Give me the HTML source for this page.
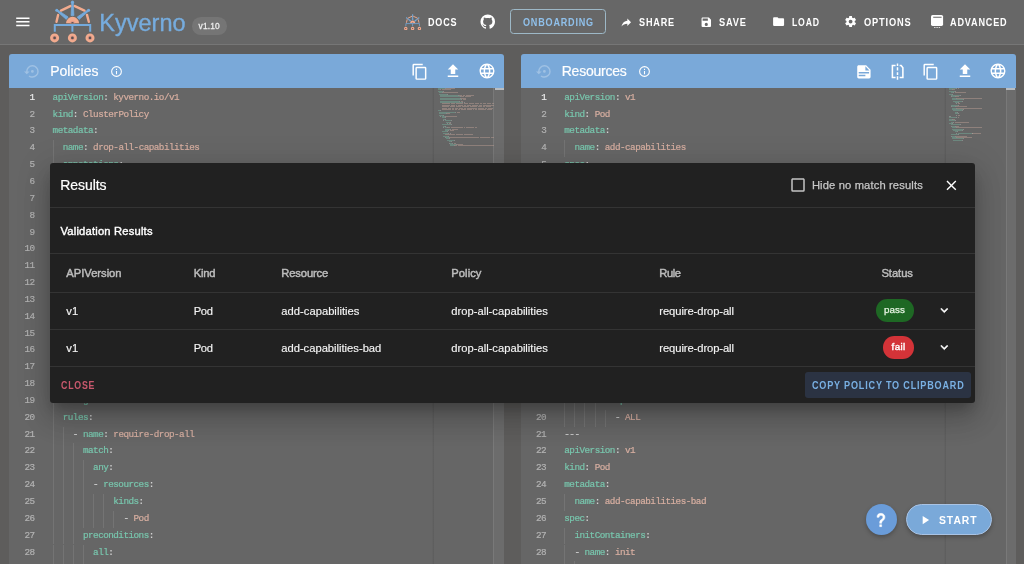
<!DOCTYPE html><html><head><meta charset="utf-8"><title>Kyverno Playground</title><style>
*{box-sizing:border-box;margin:0;padding:0}
html,body{will-change:transform;width:1024px;height:564px;overflow:hidden;background:#5e5d5c;font-family:"Liberation Sans",sans-serif;}
.abs{position:absolute}
.mm i{position:absolute;height:1.1px;opacity:.34}
#appbar{position:absolute;left:0;top:0;width:1024px;height:44.5px;background:#676767;border-bottom:1px solid #767676}
.nav{position:absolute;top:0;height:44px;line-height:44px;color:#fff;font-weight:bold;font-size:9.6px;letter-spacing:1.05px;white-space:nowrap}
.panel{position:absolute;top:54.2px;height:520px;background:#666666;border-radius:3px 3px 0 0;overflow:hidden}
.phead{position:absolute;left:0;top:0;right:0;height:33.8px;background:#7aa9d9}
.ptitle{position:absolute;top:0;height:33.8px;line-height:33.8px;color:#fff;font-size:14px;white-space:nowrap}
.ln{position:absolute;height:16.842px;line-height:16.842px;text-align:right;color:#b2b2b2;font-family:"Liberation Mono",monospace;font-size:9.300px;letter-spacing:-0.520px;white-space:pre}
.ln.act{color:#ececec}
.cl{position:absolute;height:16.842px;line-height:16.842px;font-family:"Liberation Mono",monospace;font-size:9.300px;letter-spacing:-0.520px;white-space:pre;color:#d2d2d2}
.k{color:#78c6ad} .v{color:#d8afa1} .p{color:#d2d2d2}
.cl,.ln{-webkit-text-stroke:0.2px}
.ig{position:absolute;width:1px;height:16.842px;background:#747474}
#dlg{position:absolute;left:50px;top:162.6px;width:924.9px;height:240.2px;background:#212121;border-radius:3px;box-shadow:0 8px 11px -4px rgba(0,0,0,.2),0 17px 27px 2px rgba(0,0,0,.14),0 6px 32px 5px rgba(0,0,0,.12)}
.hr{position:absolute;left:0;right:0;height:1px;background:#373737}
.th{position:absolute;top:90.3px;height:39.2px;line-height:39.2px;color:#bcbcbc;font-size:11.2px;white-space:nowrap;-webkit-text-stroke:0.3px #bcbcbc}
.td{position:absolute;height:37px;line-height:37px;color:#f2f2f2;font-size:11.2px;white-space:nowrap}
.chip{position:absolute;height:22.2px;line-height:22.2px;border-radius:11.1px;color:#fff;font-size:9.8px;text-align:center}
</style></head><body>
<div id="appbar"></div>
<svg class="abs" style="left:13.70px;top:12.90px;opacity:1" width="17.7" height="17.7" viewBox="0 0 24 24"><path fill="#fff" d="M3,6H21V8H3V6M3,11H21V13H3V11M3,16H21V18H3V16Z"/></svg>
<svg class="abs" style="left:49.8px;top:0px" width="45.00" height="43.00" viewBox="0 0 45 43"><g fill="none"><path d="M4.8 31.8V24.9H40.2V31.8M22.4 24.9V31.8" stroke="#74aadc" stroke-width="2" stroke-linecap="butt" stroke-linejoin="miter"/><circle cx="4.6" cy="37.9" r="4.5" fill="#f2ab8e"/><circle cx="4.6" cy="37.9" r="2.3" fill="#e59a88"/><circle cx="4.6" cy="37.9" r="1.35" fill="#5a5050"/><circle cx="22.4" cy="37.9" r="4.5" fill="#f2ab8e"/><circle cx="22.4" cy="37.9" r="2.3" fill="#e59a88"/><circle cx="22.4" cy="37.9" r="1.35" fill="#5a5050"/><circle cx="40.0" cy="37.9" r="4.5" fill="#f2ab8e"/><circle cx="40.0" cy="37.9" r="2.3" fill="#e59a88"/><circle cx="40.0" cy="37.9" r="1.35" fill="#5a5050"/><path d="M16.05 23.3A6.5 6.5 0 0 1 29.05 23.3Z" fill="#f2ab8e"/><path d="M19.9 23.3A2.6 2.6 0 0 1 25.1 23.3Z" fill="#e59a88"/><path d="M21.2 23.3A1.3 1.3 0 0 1 23.8 23.3Z" fill="#5a5050"/><polygon points="21.80,2.20 21.10,15.60 23.90,15.60 23.20,2.20" fill="#74aadc" stroke="#74aadc" stroke-width="0.8" stroke-linejoin="round"/><circle cx="22.5" cy="2.2" r="1.6" fill="#74aadc"/><polygon points="6.43,10.68 16.29,19.39 18.11,17.01 7.17,9.72" fill="#74aadc" stroke="#74aadc" stroke-width="0.8" stroke-linejoin="round"/><circle cx="6.8" cy="10.2" r="1.5" fill="#74aadc"/><polygon points="38.23,9.72 27.29,17.01 29.11,19.39 38.97,10.68" fill="#74aadc" stroke="#74aadc" stroke-width="0.8" stroke-linejoin="round"/><circle cx="38.6" cy="10.2" r="1.5" fill="#74aadc"/><path d="M10.9 10.6L20.3 6.1M24.8 6.1L34.5 10.6M8.1 14.9L6.5 21.8M37 14.9L38.8 21.8" stroke="#f2ab8e" stroke-width="2.4" stroke-linecap="round"/></g></svg>
<div class="abs" style="left:99.20px;top:7.98px;height:30.55px;line-height:30.55px;font-size:23.5px;color:#76acde;white-space:nowrap;letter-spacing:0.032px;-webkit-text-stroke:0.35px #76acde;">Kyverno</div>
<div class="abs" style="left:192.1px;top:17px;width:34.9px;height:17.7px;border-radius:8.85px;background:#757575"></div>
<div class="abs" style="left:198.60px;top:20.53px;height:10.92px;line-height:10.92px;font-size:8.4px;color:#ececec;white-space:nowrap;letter-spacing:0.138px;-webkit-text-stroke:0.3px #ececec;">v1.10</div>
<svg class="abs" style="left:404.3px;top:13.6px" width="17.32" height="16.55" viewBox="0 0 45 43"><g fill="none"><path d="M4.8 31.8V24.9H40.2V31.8M22.4 24.9V31.8" stroke="#74aadc" stroke-width="2" stroke-linecap="butt" stroke-linejoin="miter"/><circle cx="4.6" cy="37.9" r="4.5" fill="#f2ab8e"/><circle cx="4.6" cy="37.9" r="2.3" fill="#e59a88"/><circle cx="4.6" cy="37.9" r="1.35" fill="#5a5050"/><circle cx="22.4" cy="37.9" r="4.5" fill="#f2ab8e"/><circle cx="22.4" cy="37.9" r="2.3" fill="#e59a88"/><circle cx="22.4" cy="37.9" r="1.35" fill="#5a5050"/><circle cx="40.0" cy="37.9" r="4.5" fill="#f2ab8e"/><circle cx="40.0" cy="37.9" r="2.3" fill="#e59a88"/><circle cx="40.0" cy="37.9" r="1.35" fill="#5a5050"/><path d="M16.05 23.3A6.5 6.5 0 0 1 29.05 23.3Z" fill="#f2ab8e"/><path d="M19.9 23.3A2.6 2.6 0 0 1 25.1 23.3Z" fill="#e59a88"/><path d="M21.2 23.3A1.3 1.3 0 0 1 23.8 23.3Z" fill="#5a5050"/><polygon points="21.80,2.20 21.10,15.60 23.90,15.60 23.20,2.20" fill="#74aadc" stroke="#74aadc" stroke-width="0.8" stroke-linejoin="round"/><circle cx="22.5" cy="2.2" r="1.6" fill="#74aadc"/><polygon points="6.43,10.68 16.29,19.39 18.11,17.01 7.17,9.72" fill="#74aadc" stroke="#74aadc" stroke-width="0.8" stroke-linejoin="round"/><circle cx="6.8" cy="10.2" r="1.5" fill="#74aadc"/><polygon points="38.23,9.72 27.29,17.01 29.11,19.39 38.97,10.68" fill="#74aadc" stroke="#74aadc" stroke-width="0.8" stroke-linejoin="round"/><circle cx="38.6" cy="10.2" r="1.5" fill="#74aadc"/><path d="M10.9 10.6L20.3 6.1M24.8 6.1L34.5 10.6M8.1 14.9L6.5 21.8M37 14.9L38.8 21.8" stroke="#f2ab8e" stroke-width="2.4" stroke-linecap="round"/></g></svg>
<div class="abs" style="left:427.75px;top:15.93px;height:13.13px;line-height:13.13px;font-size:10.1px;color:#fff;white-space:nowrap;font-weight:bold;letter-spacing:0.900px;transform:scaleX(0.8955);transform-origin:0 50%;">DOCS</div>
<svg class="abs" style="left:479.15px;top:12.95px;opacity:1" width="17.5" height="17.5" viewBox="0 0 24 24"><path fill="#fff" d="M12,2A10,10 0 0,0 2,12C2,16.42 4.87,20.17 8.84,21.5C9.34,21.58 9.5,21.27 9.5,21C9.5,20.77 9.5,20.14 9.5,19.31C6.73,19.91 6.14,17.97 6.14,17.97C5.68,16.81 5.03,16.5 5.03,16.5C4.12,15.88 5.1,15.9 5.1,15.9C6.1,15.97 6.63,16.93 6.63,16.93C7.5,18.45 8.97,18 9.54,17.76C9.63,17.11 9.89,16.67 10.17,16.42C7.95,16.17 5.62,15.31 5.62,11.5C5.62,10.39 6,9.5 6.65,8.79C6.55,8.54 6.2,7.5 6.75,6.15C6.75,6.15 7.59,5.88 9.5,7.17C10.29,6.95 11.15,6.84 12,6.84C12.85,6.84 13.71,6.95 14.5,7.17C16.41,5.88 17.25,6.15 17.25,6.15C17.8,7.5 17.45,8.54 17.35,8.79C18,9.5 18.38,10.39 18.38,11.5C18.38,15.32 16.04,16.16 13.81,16.41C14.17,16.72 14.5,17.33 14.5,18.26C14.5,19.6 14.5,20.68 14.5,21C14.5,21.27 14.66,21.59 15.17,21.5C19.14,20.16 22,16.42 22,12A10,10 0 0,0 12,2Z"/></svg>
<div class="abs" style="left:509.9px;top:8.8px;width:96.6px;height:25.6px;border:1.5px solid #9db8c7;border-radius:3.5px"></div>
<div class="abs" style="left:523.00px;top:15.93px;height:13.13px;line-height:13.13px;font-size:10.1px;color:#90c0ea;white-space:nowrap;font-weight:bold;letter-spacing:0.900px;transform:scaleX(0.8973);transform-origin:0 50%;">ONBOARDING</div>
<svg class="abs" style="left:619.90px;top:15.60px;opacity:1" width="12.6" height="12.6" viewBox="0 0 24 24"><path fill="#fff" d="M21,12L14,5V9C7,10 4,15 3,20C5.5,16.5 9,14.9 14,14.9V19L21,12Z"/></svg>
<div class="abs" style="left:639.30px;top:15.93px;height:13.13px;line-height:13.13px;font-size:10.1px;color:#fff;white-space:nowrap;font-weight:bold;letter-spacing:0.900px;transform:scaleX(0.9010);transform-origin:0 50%;">SHARE</div>
<svg class="abs" style="left:699.50px;top:15.60px;opacity:1" width="12.6" height="12.6" viewBox="0 0 24 24"><path fill="#fff" d="M15,9H5V5H15M12,19A3,3 0 0,1 9,16A3,3 0 0,1 12,13A3,3 0 0,1 15,16A3,3 0 0,1 12,19M17,3H5C3.89,3 3,3.9 3,5V19A2,2 0 0,0 5,21H19A2,2 0 0,0 21,19V7L17,3Z"/></svg>
<div class="abs" style="left:719.00px;top:15.93px;height:13.13px;line-height:13.13px;font-size:10.1px;color:#fff;white-space:nowrap;font-weight:bold;letter-spacing:0.900px;transform:scaleX(0.9167);transform-origin:0 50%;">SAVE</div>
<svg class="abs" style="left:772.10px;top:15.00px;opacity:1" width="13.2" height="13.2" viewBox="0 0 24 24"><path fill="#fff" d="M10,4H4C2.89,4 2,4.89 2,6V18A2,2 0 0,0 4,20H20A2,2 0 0,0 22,18V8C22,6.89 21.1,6 20,6H12L10,4Z"/></svg>
<div class="abs" style="left:791.50px;top:15.93px;height:13.13px;line-height:13.13px;font-size:10.1px;color:#fff;white-space:nowrap;font-weight:bold;letter-spacing:0.900px;transform:scaleX(0.8622);transform-origin:0 50%;">LOAD</div>
<svg class="abs" style="left:844.30px;top:15.30px;opacity:1" width="13.2" height="13.2" viewBox="0 0 24 24"><path fill="#fff" d="M12,15.5A3.5,3.5 0 0,1 8.5,12A3.5,3.5 0 0,1 12,8.5A3.5,3.5 0 0,1 15.5,12A3.5,3.5 0 0,1 12,15.5M19.43,12.97C19.47,12.65 19.5,12.33 19.5,12C19.5,11.67 19.47,11.34 19.43,11L21.54,9.37C21.73,9.22 21.78,8.95 21.66,8.73L19.66,5.27C19.54,5.05 19.27,4.96 19.05,5.05L16.56,6.05C16.04,5.66 15.5,5.32 14.87,5.07L14.5,2.42C14.46,2.18 14.25,2 14,2H10C9.75,2 9.54,2.18 9.5,2.42L9.13,5.07C8.5,5.32 7.96,5.66 7.44,6.05L4.95,5.05C4.73,4.96 4.46,5.05 4.34,5.27L2.34,8.73C2.21,8.95 2.27,9.22 2.46,9.37L4.57,11C4.53,11.34 4.5,11.67 4.5,12C4.5,12.33 4.53,12.65 4.57,12.97L2.46,14.63C2.27,14.78 2.21,15.05 2.34,15.27L4.34,18.73C4.46,18.95 4.73,19.03 4.95,18.95L7.44,17.94C7.96,18.34 8.5,18.68 9.13,18.93L9.5,21.58C9.54,21.82 9.75,22 10,22H14C14.25,22 14.46,21.82 14.5,21.58L14.87,18.93C15.5,18.67 16.04,18.34 16.56,17.94L19.05,18.95C19.27,19.03 19.54,18.95 19.66,18.73L21.66,15.27C21.78,15.05 21.73,14.78 21.54,14.63L19.43,12.97Z"/></svg>
<div class="abs" style="left:864.00px;top:15.93px;height:13.13px;line-height:13.13px;font-size:10.1px;color:#fff;white-space:nowrap;font-weight:bold;letter-spacing:0.900px;transform:scaleX(0.9183);transform-origin:0 50%;">OPTIONS</div>
<svg class="abs" style="left:929px;top:13px" width="16" height="17" viewBox="0 0 16 17"><rect x="2" y="1.9" width="12.1" height="11" rx="1.6" fill="#fff"/><path d="M4.2 4.25H12.6" stroke="#666" stroke-width="1"/><path d="M5.1 14.5H11.1" stroke="#ddd" stroke-width="1" stroke-dasharray="1.4 0.9"/></svg>
<div class="abs" style="left:950.25px;top:15.93px;height:13.13px;line-height:13.13px;font-size:10.1px;color:#fff;white-space:nowrap;font-weight:bold;letter-spacing:0.900px;transform:scaleX(0.9023);transform-origin:0 50%;">ADVANCED</div>
<div class="panel" style="left:9px;width:495px"><div class="phead"></div></div>
<div class="panel" style="left:520.7px;width:495px"><div class="phead"></div></div>
<div class="abs" style="left:432.1px;top:88px;width:2.4px;height:480px;background:linear-gradient(90deg,rgba(0,0,0,0),rgba(0,0,0,.09) 70%,rgba(0,0,0,0))"></div>
<div class="abs" style="left:493.3px;top:88px;width:10.7px;height:480px;background:#6c6c6c;border-left:1px solid #797979"></div>
<div class="abs" style="left:494.6px;top:88px;width:9.2px;height:1.6px;background:#b9bdc1"></div>
<div class="abs" style="left:943.8000000000001px;top:88px;width:2.4px;height:480px;background:linear-gradient(90deg,rgba(0,0,0,0),rgba(0,0,0,.09) 70%,rgba(0,0,0,0))"></div>
<div class="abs" style="left:1005.7px;top:88px;width:10.0px;height:480px;background:#6c6c6c;border-left:1px solid #797979"></div>
<div class="abs" style="left:1006.3000000000001px;top:88px;width:9.2px;height:1.6px;background:#b9bdc1"></div>
<svg class="abs" style="left:24.20px;top:63.10px;opacity:0.28" width="16.8" height="16.8" viewBox="0 0 24 24"><path fill="#fff" d="M12,3A9,9 0 0,0 3,12H0L4,16L8,12H5A7,7 0 0,1 12,5A7,7 0 0,1 19,12A7,7 0 0,1 12,19C10.5,19 9.09,18.5 7.94,17.7L6.5,19.14C8.04,20.3 9.94,21 12,21A9,9 0 0,0 21,12A9,9 0 0,0 12,3M14,12A2,2 0 0,0 12,10A2,2 0 0,0 10,12A2,2 0 0,0 12,14A2,2 0 0,0 14,12Z"/></svg>
<div class="abs" style="left:50.20px;top:61.75px;height:18.2px;line-height:18.2px;font-size:14px;color:#fff;white-space:nowrap;letter-spacing:0.008px;-webkit-text-stroke:0.2px #fff;">Policies</div>
<svg class="abs" style="left:110.40px;top:64.90px;opacity:1" width="13" height="13" viewBox="0 0 24 24"><path fill="#fff" d="M11,9H13V7H11M12,20C7.59,20 4,16.41 4,12C4,7.59 7.59,4 12,4C16.41,4 20,7.59 20,12C20,16.41 16.41,20 12,20M12,2A10,10 0 0,0 2,12A10,10 0 0,0 12,22A10,10 0 0,0 22,12A10,10 0 0,0 12,2M11,17H13V11H11V17Z"/></svg>
<svg class="abs" style="left:410.80px;top:62.90px;opacity:1" width="17.6" height="17.6" viewBox="0 0 24 24"><path fill="#fff" d="M19,21H8V7H19M19,5H8A2,2 0 0,0 6,7V21A2,2 0 0,0 8,23H19A2,2 0 0,0 21,21V7A2,2 0 0,0 19,5M16,1H4A2,2 0 0,0 2,3V17H4V3H16V1Z"/></svg>
<svg class="abs" style="left:444.20px;top:62.40px;opacity:1" width="18" height="18" viewBox="0 0 24 24"><path fill="#fff" d="M9,16V10H5L12,3L19,10H15V16H9M5,20V18H19V20H5Z"/></svg>
<svg class="abs" style="left:478.00px;top:62.40px;opacity:1" width="18" height="18" viewBox="0 0 24 24"><path fill="#fff" d="M16.36,14C16.44,13.34 16.5,12.68 16.5,12C16.5,11.32 16.44,10.66 16.36,10H19.74C19.9,10.64 20,11.31 20,12C20,12.69 19.9,13.36 19.74,14M14.59,19.56C15.19,18.45 15.65,17.25 15.97,16H18.92C17.96,17.65 16.43,18.93 14.59,19.56M14.34,14H9.66C9.56,13.34 9.5,12.68 9.5,12C9.5,11.32 9.56,10.65 9.66,10H14.34C14.43,10.65 14.5,11.32 14.5,12C14.5,12.68 14.43,13.34 14.34,14M12,19.96C11.17,18.76 10.5,17.43 10.09,16H13.91C13.5,17.43 12.83,18.76 12,19.96M8,8H5.08C6.03,6.34 7.57,5.06 9.4,4.44C8.8,5.55 8.35,6.75 8,8M5.08,16H8C8.35,17.25 8.8,18.45 9.4,19.56C7.57,18.93 6.03,17.65 5.08,16M4.26,14C4.1,13.36 4,12.69 4,12C4,11.31 4.1,10.64 4.26,10H7.64C7.56,10.66 7.5,11.32 7.5,12C7.5,12.68 7.56,13.34 7.64,14M12,4.03C12.83,5.23 13.5,6.57 13.91,8H10.09C10.5,6.57 11.17,5.23 12,4.03M18.92,8H15.97C15.65,6.75 15.19,5.55 14.59,4.44C16.43,5.07 17.96,6.34 18.92,8M12,2C6.47,2 2,6.5 2,12A10,10 0 0,0 12,22A10,10 0 0,0 22,12A10,10 0 0,0 12,2Z"/></svg>
<svg class="abs" style="left:536.10px;top:63.10px;opacity:0.28" width="16.8" height="16.8" viewBox="0 0 24 24"><path fill="#fff" d="M12,3A9,9 0 0,0 3,12H0L4,16L8,12H5A7,7 0 0,1 12,5A7,7 0 0,1 19,12A7,7 0 0,1 12,19C10.5,19 9.09,18.5 7.94,17.7L6.5,19.14C8.04,20.3 9.94,21 12,21A9,9 0 0,0 21,12A9,9 0 0,0 12,3M14,12A2,2 0 0,0 12,10A2,2 0 0,0 10,12A2,2 0 0,0 12,14A2,2 0 0,0 14,12Z"/></svg>
<div class="abs" style="left:561.70px;top:61.75px;height:18.2px;line-height:18.2px;font-size:14px;color:#fff;white-space:nowrap;letter-spacing:-0.227px;-webkit-text-stroke:0.2px #fff;">Resources</div>
<svg class="abs" style="left:637.80px;top:64.90px;opacity:1" width="13" height="13" viewBox="0 0 24 24"><path fill="#fff" d="M11,9H13V7H11M12,20C7.59,20 4,16.41 4,12C4,7.59 7.59,4 12,4C16.41,4 20,7.59 20,12C20,16.41 16.41,20 12,20M12,2A10,10 0 0,0 2,12A10,10 0 0,0 12,22A10,10 0 0,0 22,12A10,10 0 0,0 12,2M11,17H13V11H11V17Z"/></svg>
<svg class="abs" style="left:855.05px;top:62.65px;opacity:1" width="17.8" height="17.8" viewBox="0 0 24 24"><path fill="#fff" d="M14,10H19.5L14,4.5V10M5,3H15L21,9V19A2,2 0 0,1 19,21H5C3.89,21 3,20.1 3,19V5C3,3.89 3.89,3 5,3M5,12V14H19V12H5M5,16V18H14V16H5Z"/></svg>
<svg class="abs" style="left:889.4px;top:63.35px" width="17" height="17" viewBox="0 0 24 24"><path d="M9.3 3.6H4.8V20.4H9.3M15 3.6H17.2L19.6 6.6V20.4H15" fill="none" stroke="#fff" stroke-width="2.2"/><path d="M12 .8V4.4M12 6.1V10.7M12 12.9V16.9M12 18.7V23.6" stroke="#fff" stroke-width="2.1" fill="none"/></svg>
<svg class="abs" style="left:922.40px;top:62.90px;opacity:1" width="17.6" height="17.6" viewBox="0 0 24 24"><path fill="#fff" d="M19,21H8V7H19M19,5H8A2,2 0 0,0 6,7V21A2,2 0 0,0 8,23H19A2,2 0 0,0 21,21V7A2,2 0 0,0 19,5M16,1H4A2,2 0 0,0 2,3V17H4V3H16V1Z"/></svg>
<svg class="abs" style="left:955.80px;top:62.40px;opacity:1" width="18" height="18" viewBox="0 0 24 24"><path fill="#fff" d="M9,16V10H5L12,3L19,10H15V16H9M5,20V18H19V20H5Z"/></svg>
<svg class="abs" style="left:989.40px;top:62.40px;opacity:1" width="18" height="18" viewBox="0 0 24 24"><path fill="#fff" d="M16.36,14C16.44,13.34 16.5,12.68 16.5,12C16.5,11.32 16.44,10.66 16.36,10H19.74C19.9,10.64 20,11.31 20,12C20,12.69 19.9,13.36 19.74,14M14.59,19.56C15.19,18.45 15.65,17.25 15.97,16H18.92C17.96,17.65 16.43,18.93 14.59,19.56M14.34,14H9.66C9.56,13.34 9.5,12.68 9.5,12C9.5,11.32 9.56,10.65 9.66,10H14.34C14.43,10.65 14.5,11.32 14.5,12C14.5,12.68 14.43,13.34 14.34,14M12,19.96C11.17,18.76 10.5,17.43 10.09,16H13.91C13.5,17.43 12.83,18.76 12,19.96M8,8H5.08C6.03,6.34 7.57,5.06 9.4,4.44C8.8,5.55 8.35,6.75 8,8M5.08,16H8C8.35,17.25 8.8,18.45 9.4,19.56C7.57,18.93 6.03,17.65 5.08,16M4.26,14C4.1,13.36 4,12.69 4,12C4,11.31 4.1,10.64 4.26,10H7.64C7.56,10.66 7.5,11.32 7.5,12C7.5,12.68 7.56,13.34 7.64,14M12,4.03C12.83,5.23 13.5,6.57 13.91,8H10.09C10.5,6.57 11.17,5.23 12,4.03M18.92,8H15.97C15.65,6.75 15.19,5.55 14.59,4.44C16.43,5.07 17.96,6.34 18.92,8M12,2C6.47,2 2,6.5 2,12A10,10 0 0,0 12,22A10,10 0 0,0 22,12A10,10 0 0,0 12,2Z"/></svg>
<div class="ln act" style="top:89.78px;left:4.60px;width:30px">1</div>
<div class="cl" style="top:89.78px;left:52.60px"><span class="k">apiVersion</span><span class="p">:&nbsp;</span><span class="v">kyverno.io/v1</span></div>
<div class="ln" style="top:106.62px;left:4.60px;width:30px">2</div>
<div class="cl" style="top:106.62px;left:52.60px"><span class="k">kind</span><span class="p">:&nbsp;</span><span class="v">ClusterPolicy</span></div>
<div class="ln" style="top:123.46px;left:4.60px;width:30px">3</div>
<div class="cl" style="top:123.46px;left:52.60px"><span class="k">metadata</span><span class="p">:</span></div>
<div class="ln" style="top:140.31px;left:4.60px;width:30px">4</div>
<div class="cl" style="top:140.31px;left:52.60px"><span class="p">&nbsp;&nbsp;</span><span class="k">name</span><span class="p">:&nbsp;</span><span class="v">drop-all-capabilities</span></div>
<div class="ig" style="top:140.31px;left:52.50px"></div>
<div class="ln" style="top:157.15px;left:4.60px;width:30px">5</div>
<div class="cl" style="top:157.15px;left:52.60px"><span class="p">&nbsp;&nbsp;</span><span class="k">annotations</span><span class="p">:</span></div>
<div class="ig" style="top:157.15px;left:52.50px"></div>
<div class="ln" style="top:173.99px;left:4.60px;width:30px">6</div>
<div class="cl" style="top:173.99px;left:52.60px"><span class="p">&nbsp;&nbsp;&nbsp;&nbsp;</span><span class="k">policies.kyverno.io/title</span><span class="p">:&nbsp;</span><span class="v">Drop&nbsp;All&nbsp;Capabilities</span></div>
<div class="ig" style="top:173.99px;left:52.50px"></div>
<div class="ig" style="top:173.99px;left:62.62px"></div>
<div class="ln" style="top:190.83px;left:4.60px;width:30px">7</div>
<div class="cl" style="top:190.83px;left:52.60px"><span class="p">&nbsp;&nbsp;&nbsp;&nbsp;</span><span class="k">policies.kyverno.io/category</span><span class="p">:&nbsp;</span><span class="v">Best&nbsp;Practices</span></div>
<div class="ig" style="top:190.83px;left:52.50px"></div>
<div class="ig" style="top:190.83px;left:62.62px"></div>
<div class="ln" style="top:207.67px;left:4.60px;width:30px">8</div>
<div class="cl" style="top:207.67px;left:52.60px"><span class="p">&nbsp;&nbsp;&nbsp;&nbsp;</span><span class="k">policies.kyverno.io/severity</span><span class="p">:&nbsp;</span><span class="v">medium</span></div>
<div class="ig" style="top:207.67px;left:52.50px"></div>
<div class="ig" style="top:207.67px;left:62.62px"></div>
<div class="ln" style="top:224.51px;left:4.60px;width:30px">9</div>
<div class="cl" style="top:224.51px;left:52.60px"><span class="p">&nbsp;&nbsp;&nbsp;&nbsp;</span><span class="k">policies.kyverno.io/minversion</span><span class="p">:&nbsp;</span><span class="v">1.6.0</span></div>
<div class="ig" style="top:224.51px;left:52.50px"></div>
<div class="ig" style="top:224.51px;left:62.62px"></div>
<div class="ln" style="top:241.36px;left:4.60px;width:30px">10</div>
<div class="cl" style="top:241.36px;left:52.60px"><span class="p">&nbsp;&nbsp;&nbsp;&nbsp;</span><span class="k">policies.kyverno.io/subject</span><span class="p">:&nbsp;</span><span class="v">Pod</span></div>
<div class="ig" style="top:241.36px;left:52.50px"></div>
<div class="ig" style="top:241.36px;left:62.62px"></div>
<div class="ln" style="top:258.20px;left:4.60px;width:30px">11</div>
<div class="cl" style="top:258.20px;left:52.60px"><span class="p">&nbsp;&nbsp;&nbsp;&nbsp;</span><span class="k">policies.kyverno.io/description</span><span class="p">:&nbsp;</span><span class="p">>-</span></div>
<div class="ig" style="top:258.20px;left:52.50px"></div>
<div class="ig" style="top:258.20px;left:62.62px"></div>
<div class="ln" style="top:275.04px;left:4.60px;width:30px">12</div>
<div class="cl" style="top:275.04px;left:52.60px"><span class="p">&nbsp;&nbsp;&nbsp;&nbsp;&nbsp;&nbsp;</span><span class="v">Capabilities&nbsp;permit&nbsp;privileged&nbsp;actions&nbsp;without&nbsp;giving&nbsp;full&nbsp;root&nbsp;access.&nbsp;All</span></div>
<div class="ig" style="top:275.04px;left:52.50px"></div>
<div class="ig" style="top:275.04px;left:62.62px"></div>
<div class="ig" style="top:275.04px;left:72.74px"></div>
<div class="ln" style="top:291.88px;left:4.60px;width:30px">13</div>
<div class="cl" style="top:291.88px;left:52.60px"><span class="p">&nbsp;&nbsp;&nbsp;&nbsp;&nbsp;&nbsp;</span><span class="v">capabilities&nbsp;should&nbsp;be&nbsp;dropped&nbsp;from&nbsp;a&nbsp;Pod,&nbsp;with&nbsp;only&nbsp;those&nbsp;required&nbsp;added.</span></div>
<div class="ig" style="top:291.88px;left:52.50px"></div>
<div class="ig" style="top:291.88px;left:62.62px"></div>
<div class="ig" style="top:291.88px;left:72.74px"></div>
<div class="ln" style="top:308.72px;left:4.60px;width:30px">14</div>
<div class="cl" style="top:308.72px;left:52.60px"><span class="p">&nbsp;&nbsp;&nbsp;&nbsp;&nbsp;&nbsp;</span><span class="v">This&nbsp;policy&nbsp;ensures&nbsp;that&nbsp;all&nbsp;containers&nbsp;explicitly&nbsp;specify&nbsp;the&nbsp;drop&nbsp;ALL</span></div>
<div class="ig" style="top:308.72px;left:52.50px"></div>
<div class="ig" style="top:308.72px;left:62.62px"></div>
<div class="ig" style="top:308.72px;left:72.74px"></div>
<div class="ln" style="top:325.57px;left:4.60px;width:30px">15</div>
<div class="cl" style="top:325.57px;left:52.60px"><span class="p">&nbsp;&nbsp;&nbsp;&nbsp;&nbsp;&nbsp;</span><span class="v">ability.&nbsp;Note&nbsp;that&nbsp;this&nbsp;policy&nbsp;also&nbsp;illustrates&nbsp;how&nbsp;to&nbsp;cover&nbsp;drop&nbsp;entries</span></div>
<div class="ig" style="top:325.57px;left:52.50px"></div>
<div class="ig" style="top:325.57px;left:62.62px"></div>
<div class="ig" style="top:325.57px;left:72.74px"></div>
<div class="ln" style="top:342.41px;left:4.60px;width:30px">16</div>
<div class="cl" style="top:342.41px;left:52.60px"><span class="p">&nbsp;&nbsp;&nbsp;&nbsp;&nbsp;&nbsp;</span><span class="v">case&nbsp;although&nbsp;this&nbsp;may&nbsp;not&nbsp;strictly&nbsp;conform&nbsp;to&nbsp;the&nbsp;Pod&nbsp;Security&nbsp;Standard</span></div>
<div class="ig" style="top:342.41px;left:52.50px"></div>
<div class="ig" style="top:342.41px;left:62.62px"></div>
<div class="ig" style="top:342.41px;left:72.74px"></div>
<div class="ln" style="top:359.25px;left:4.60px;width:30px">17</div>
<div class="cl" style="top:359.25px;left:52.60px"><span class="k">spec</span><span class="p">:</span></div>
<div class="ln" style="top:376.09px;left:4.60px;width:30px">18</div>
<div class="cl" style="top:376.09px;left:52.60px"><span class="p">&nbsp;&nbsp;</span><span class="k">validationFailureAction</span><span class="p">:&nbsp;</span><span class="v">Audit</span></div>
<div class="ig" style="top:376.09px;left:52.50px"></div>
<div class="ln" style="top:392.93px;left:4.60px;width:30px">19</div>
<div class="cl" style="top:392.93px;left:52.60px"><span class="p">&nbsp;&nbsp;</span><span class="k">background</span><span class="p">:&nbsp;</span><span class="v">true</span></div>
<div class="ig" style="top:392.93px;left:52.50px"></div>
<div class="ln" style="top:409.78px;left:4.60px;width:30px">20</div>
<div class="cl" style="top:409.78px;left:52.60px"><span class="p">&nbsp;&nbsp;</span><span class="k">rules</span><span class="p">:</span></div>
<div class="ig" style="top:409.78px;left:52.50px"></div>
<div class="ln" style="top:426.62px;left:4.60px;width:30px">21</div>
<div class="cl" style="top:426.62px;left:52.60px"><span class="p">&nbsp;&nbsp;&nbsp;&nbsp;-&nbsp;</span><span class="k">name</span><span class="p">:&nbsp;</span><span class="v">require-drop-all</span></div>
<div class="ig" style="top:426.62px;left:52.50px"></div>
<div class="ig" style="top:426.62px;left:62.62px"></div>
<div class="ln" style="top:443.46px;left:4.60px;width:30px">22</div>
<div class="cl" style="top:443.46px;left:52.60px"><span class="p">&nbsp;&nbsp;&nbsp;&nbsp;&nbsp;&nbsp;</span><span class="k">match</span><span class="p">:</span></div>
<div class="ig" style="top:443.46px;left:52.50px"></div>
<div class="ig" style="top:443.46px;left:62.62px"></div>
<div class="ig" style="top:443.46px;left:72.74px"></div>
<div class="ln" style="top:460.30px;left:4.60px;width:30px">23</div>
<div class="cl" style="top:460.30px;left:52.60px"><span class="p">&nbsp;&nbsp;&nbsp;&nbsp;&nbsp;&nbsp;&nbsp;&nbsp;</span><span class="k">any</span><span class="p">:</span></div>
<div class="ig" style="top:460.30px;left:52.50px"></div>
<div class="ig" style="top:460.30px;left:62.62px"></div>
<div class="ig" style="top:460.30px;left:72.74px"></div>
<div class="ig" style="top:460.30px;left:82.86px"></div>
<div class="ln" style="top:477.14px;left:4.60px;width:30px">24</div>
<div class="cl" style="top:477.14px;left:52.60px"><span class="p">&nbsp;&nbsp;&nbsp;&nbsp;&nbsp;&nbsp;&nbsp;&nbsp;-&nbsp;</span><span class="k">resources</span><span class="p">:</span></div>
<div class="ig" style="top:477.14px;left:52.50px"></div>
<div class="ig" style="top:477.14px;left:62.62px"></div>
<div class="ig" style="top:477.14px;left:72.74px"></div>
<div class="ig" style="top:477.14px;left:82.86px"></div>
<div class="ln" style="top:493.99px;left:4.60px;width:30px">25</div>
<div class="cl" style="top:493.99px;left:52.60px"><span class="p">&nbsp;&nbsp;&nbsp;&nbsp;&nbsp;&nbsp;&nbsp;&nbsp;&nbsp;&nbsp;&nbsp;&nbsp;</span><span class="k">kinds</span><span class="p">:</span></div>
<div class="ig" style="top:493.99px;left:52.50px"></div>
<div class="ig" style="top:493.99px;left:62.62px"></div>
<div class="ig" style="top:493.99px;left:72.74px"></div>
<div class="ig" style="top:493.99px;left:82.86px"></div>
<div class="ig" style="top:493.99px;left:92.98px"></div>
<div class="ig" style="top:493.99px;left:103.10px"></div>
<div class="ln" style="top:510.83px;left:4.60px;width:30px">26</div>
<div class="cl" style="top:510.83px;left:52.60px"><span class="p">&nbsp;&nbsp;&nbsp;&nbsp;&nbsp;&nbsp;&nbsp;&nbsp;&nbsp;&nbsp;&nbsp;&nbsp;&nbsp;&nbsp;-&nbsp;</span><span class="v">Pod</span></div>
<div class="ig" style="top:510.83px;left:52.50px"></div>
<div class="ig" style="top:510.83px;left:62.62px"></div>
<div class="ig" style="top:510.83px;left:72.74px"></div>
<div class="ig" style="top:510.83px;left:82.86px"></div>
<div class="ig" style="top:510.83px;left:92.98px"></div>
<div class="ig" style="top:510.83px;left:103.10px"></div>
<div class="ig" style="top:510.83px;left:113.22px"></div>
<div class="ln" style="top:527.67px;left:4.60px;width:30px">27</div>
<div class="cl" style="top:527.67px;left:52.60px"><span class="p">&nbsp;&nbsp;&nbsp;&nbsp;&nbsp;&nbsp;</span><span class="k">preconditions</span><span class="p">:</span></div>
<div class="ig" style="top:527.67px;left:52.50px"></div>
<div class="ig" style="top:527.67px;left:62.62px"></div>
<div class="ig" style="top:527.67px;left:72.74px"></div>
<div class="ln" style="top:544.51px;left:4.60px;width:30px">28</div>
<div class="cl" style="top:544.51px;left:52.60px"><span class="p">&nbsp;&nbsp;&nbsp;&nbsp;&nbsp;&nbsp;&nbsp;&nbsp;</span><span class="k">all</span><span class="p">:</span></div>
<div class="ig" style="top:544.51px;left:52.50px"></div>
<div class="ig" style="top:544.51px;left:62.62px"></div>
<div class="ig" style="top:544.51px;left:72.74px"></div>
<div class="ig" style="top:544.51px;left:82.86px"></div>
<div class="ln" style="top:561.35px;left:4.60px;width:30px">29</div>
<div class="cl" style="top:561.35px;left:52.60px"><span class="p">&nbsp;&nbsp;&nbsp;&nbsp;&nbsp;&nbsp;&nbsp;&nbsp;-&nbsp;</span><span class="k">key</span><span class="p">:&nbsp;</span><span class="v">"{{&nbsp;request.operation&nbsp;||&nbsp;'BACKGROUND'&nbsp;}}"</span></div>
<div class="ig" style="top:561.35px;left:52.50px"></div>
<div class="ig" style="top:561.35px;left:62.62px"></div>
<div class="ig" style="top:561.35px;left:72.74px"></div>
<div class="ig" style="top:561.35px;left:82.86px"></div>
<div class="ln" style="top:578.20px;left:4.60px;width:30px">30</div>
<div class="cl" style="top:578.20px;left:52.60px"><span class="p">&nbsp;&nbsp;&nbsp;&nbsp;&nbsp;&nbsp;&nbsp;&nbsp;&nbsp;&nbsp;</span><span class="k">operator</span><span class="p">:&nbsp;</span><span class="v">NotEquals</span></div>
<div class="ig" style="top:578.20px;left:52.50px"></div>
<div class="ig" style="top:578.20px;left:62.62px"></div>
<div class="ig" style="top:578.20px;left:72.74px"></div>
<div class="ig" style="top:578.20px;left:82.86px"></div>
<div class="ig" style="top:578.20px;left:92.98px"></div>
<div class="mm"><i style="left:437.6px;top:88.0px;width:7.0px;background:#7bcbb1"></i><i style="left:444.6px;top:88.0px;width:0.7px;background:#cfcfcf"></i><i style="left:446.0px;top:88.0px;width:9.1px;background:#e0b7a6"></i><i style="left:437.6px;top:89.4px;width:2.8px;background:#7bcbb1"></i><i style="left:440.4px;top:89.4px;width:0.7px;background:#cfcfcf"></i><i style="left:441.8px;top:89.4px;width:9.1px;background:#e0b7a6"></i><i style="left:437.6px;top:90.8px;width:5.6px;background:#7bcbb1"></i><i style="left:443.2px;top:90.8px;width:0.7px;background:#cfcfcf"></i><i style="left:439.0px;top:92.2px;width:2.8px;background:#7bcbb1"></i><i style="left:441.8px;top:92.2px;width:0.7px;background:#cfcfcf"></i><i style="left:443.2px;top:92.2px;width:14.7px;background:#e0b7a6"></i><i style="left:439.0px;top:93.6px;width:7.7px;background:#7bcbb1"></i><i style="left:446.7px;top:93.6px;width:0.7px;background:#cfcfcf"></i><i style="left:440.4px;top:95.0px;width:17.5px;background:#7bcbb1"></i><i style="left:457.9px;top:95.0px;width:0.7px;background:#cfcfcf"></i><i style="left:459.3px;top:95.0px;width:2.8px;background:#e0b7a6"></i><i style="left:462.8px;top:95.0px;width:2.1px;background:#e0b7a6"></i><i style="left:465.6px;top:95.0px;width:8.4px;background:#e0b7a6"></i><i style="left:440.4px;top:96.4px;width:19.6px;background:#7bcbb1"></i><i style="left:460.0px;top:96.4px;width:0.7px;background:#cfcfcf"></i><i style="left:461.4px;top:96.4px;width:2.8px;background:#e0b7a6"></i><i style="left:464.9px;top:96.4px;width:6.3px;background:#e0b7a6"></i><i style="left:440.4px;top:97.8px;width:19.6px;background:#7bcbb1"></i><i style="left:460.0px;top:97.8px;width:0.7px;background:#cfcfcf"></i><i style="left:461.4px;top:97.8px;width:4.2px;background:#e0b7a6"></i><i style="left:440.4px;top:99.2px;width:21.0px;background:#7bcbb1"></i><i style="left:461.4px;top:99.2px;width:0.7px;background:#cfcfcf"></i><i style="left:462.8px;top:99.2px;width:3.5px;background:#e0b7a6"></i><i style="left:440.4px;top:100.6px;width:18.9px;background:#7bcbb1"></i><i style="left:459.3px;top:100.6px;width:0.7px;background:#cfcfcf"></i><i style="left:460.7px;top:100.6px;width:2.1px;background:#e0b7a6"></i><i style="left:440.4px;top:102.0px;width:21.7px;background:#7bcbb1"></i><i style="left:462.1px;top:102.0px;width:0.7px;background:#cfcfcf"></i><i style="left:463.5px;top:102.0px;width:1.4px;background:#cfcfcf"></i><i style="left:441.8px;top:103.4px;width:8.4px;background:#e0b7a6"></i><i style="left:450.9px;top:103.4px;width:4.2px;background:#e0b7a6"></i><i style="left:455.8px;top:103.4px;width:7.0px;background:#e0b7a6"></i><i style="left:463.5px;top:103.4px;width:4.9px;background:#e0b7a6"></i><i style="left:469.1px;top:103.4px;width:4.9px;background:#e0b7a6"></i><i style="left:474.7px;top:103.4px;width:4.2px;background:#e0b7a6"></i><i style="left:479.6px;top:103.4px;width:2.8px;background:#e0b7a6"></i><i style="left:483.1px;top:103.4px;width:2.8px;background:#e0b7a6"></i><i style="left:486.6px;top:103.4px;width:4.9px;background:#e0b7a6"></i><i style="left:492.2px;top:103.4px;width:1.8px;background:#e0b7a6"></i><i style="left:441.8px;top:104.8px;width:8.4px;background:#e0b7a6"></i><i style="left:450.9px;top:104.8px;width:4.2px;background:#e0b7a6"></i><i style="left:455.8px;top:104.8px;width:1.4px;background:#e0b7a6"></i><i style="left:457.9px;top:104.8px;width:4.9px;background:#e0b7a6"></i><i style="left:463.5px;top:104.8px;width:2.8px;background:#e0b7a6"></i><i style="left:467.0px;top:104.8px;width:0.7px;background:#e0b7a6"></i><i style="left:468.4px;top:104.8px;width:2.8px;background:#e0b7a6"></i><i style="left:471.9px;top:104.8px;width:2.8px;background:#e0b7a6"></i><i style="left:475.4px;top:104.8px;width:2.8px;background:#e0b7a6"></i><i style="left:478.9px;top:104.8px;width:3.5px;background:#e0b7a6"></i><i style="left:483.1px;top:104.8px;width:5.6px;background:#e0b7a6"></i><i style="left:489.4px;top:104.8px;width:4.2px;background:#e0b7a6"></i><i style="left:441.8px;top:106.2px;width:2.8px;background:#e0b7a6"></i><i style="left:445.3px;top:106.2px;width:4.2px;background:#e0b7a6"></i><i style="left:450.2px;top:106.2px;width:4.9px;background:#e0b7a6"></i><i style="left:455.8px;top:106.2px;width:2.8px;background:#e0b7a6"></i><i style="left:459.3px;top:106.2px;width:2.1px;background:#e0b7a6"></i><i style="left:462.1px;top:106.2px;width:7.0px;background:#e0b7a6"></i><i style="left:469.8px;top:106.2px;width:7.0px;background:#e0b7a6"></i><i style="left:477.5px;top:106.2px;width:4.9px;background:#e0b7a6"></i><i style="left:483.1px;top:106.2px;width:2.1px;background:#e0b7a6"></i><i style="left:485.9px;top:106.2px;width:2.8px;background:#e0b7a6"></i><i style="left:489.4px;top:106.2px;width:2.1px;background:#e0b7a6"></i><i style="left:441.8px;top:107.6px;width:5.6px;background:#e0b7a6"></i><i style="left:448.1px;top:107.6px;width:2.8px;background:#e0b7a6"></i><i style="left:451.6px;top:107.6px;width:2.8px;background:#e0b7a6"></i><i style="left:455.1px;top:107.6px;width:2.8px;background:#e0b7a6"></i><i style="left:458.6px;top:107.6px;width:4.2px;background:#e0b7a6"></i><i style="left:463.5px;top:107.6px;width:2.8px;background:#e0b7a6"></i><i style="left:467.0px;top:107.6px;width:7.7px;background:#e0b7a6"></i><i style="left:475.4px;top:107.6px;width:2.1px;background:#e0b7a6"></i><i style="left:478.2px;top:107.6px;width:1.4px;background:#e0b7a6"></i><i style="left:480.3px;top:107.6px;width:3.5px;background:#e0b7a6"></i><i style="left:484.5px;top:107.6px;width:2.8px;background:#e0b7a6"></i><i style="left:488.0px;top:107.6px;width:4.9px;background:#e0b7a6"></i><i style="left:441.8px;top:109.0px;width:2.8px;background:#e0b7a6"></i><i style="left:445.3px;top:109.0px;width:5.6px;background:#e0b7a6"></i><i style="left:451.6px;top:109.0px;width:2.8px;background:#e0b7a6"></i><i style="left:455.1px;top:109.0px;width:2.1px;background:#e0b7a6"></i><i style="left:457.9px;top:109.0px;width:2.1px;background:#e0b7a6"></i><i style="left:460.7px;top:109.0px;width:5.6px;background:#e0b7a6"></i><i style="left:467.0px;top:109.0px;width:4.9px;background:#e0b7a6"></i><i style="left:472.6px;top:109.0px;width:1.4px;background:#e0b7a6"></i><i style="left:474.7px;top:109.0px;width:2.1px;background:#e0b7a6"></i><i style="left:477.5px;top:109.0px;width:2.1px;background:#e0b7a6"></i><i style="left:480.3px;top:109.0px;width:5.6px;background:#e0b7a6"></i><i style="left:486.6px;top:109.0px;width:5.6px;background:#e0b7a6"></i><i style="left:437.6px;top:110.4px;width:2.8px;background:#7bcbb1"></i><i style="left:440.4px;top:110.4px;width:0.7px;background:#cfcfcf"></i><i style="left:439.0px;top:111.8px;width:16.1px;background:#7bcbb1"></i><i style="left:455.1px;top:111.8px;width:0.7px;background:#cfcfcf"></i><i style="left:456.5px;top:111.8px;width:3.5px;background:#e0b7a6"></i><i style="left:439.0px;top:113.2px;width:7.0px;background:#7bcbb1"></i><i style="left:446.0px;top:113.2px;width:0.7px;background:#cfcfcf"></i><i style="left:447.4px;top:113.2px;width:2.8px;background:#e0b7a6"></i><i style="left:439.0px;top:114.6px;width:3.5px;background:#7bcbb1"></i><i style="left:442.5px;top:114.6px;width:0.7px;background:#cfcfcf"></i><i style="left:440.4px;top:116.0px;width:0.7px;background:#cfcfcf"></i><i style="left:441.8px;top:116.0px;width:2.8px;background:#7bcbb1"></i><i style="left:444.6px;top:116.0px;width:0.7px;background:#cfcfcf"></i><i style="left:446.0px;top:116.0px;width:11.2px;background:#e0b7a6"></i><i style="left:441.8px;top:117.4px;width:3.5px;background:#7bcbb1"></i><i style="left:445.3px;top:117.4px;width:0.7px;background:#cfcfcf"></i><i style="left:443.2px;top:118.8px;width:2.1px;background:#7bcbb1"></i><i style="left:445.3px;top:118.8px;width:0.7px;background:#cfcfcf"></i><i style="left:443.2px;top:120.2px;width:0.7px;background:#cfcfcf"></i><i style="left:444.6px;top:120.2px;width:6.3px;background:#7bcbb1"></i><i style="left:450.9px;top:120.2px;width:0.7px;background:#cfcfcf"></i><i style="left:446.0px;top:121.6px;width:3.5px;background:#7bcbb1"></i><i style="left:449.5px;top:121.6px;width:0.7px;background:#cfcfcf"></i><i style="left:447.4px;top:123.0px;width:0.7px;background:#cfcfcf"></i><i style="left:448.8px;top:123.0px;width:2.1px;background:#e0b7a6"></i><i style="left:441.8px;top:124.4px;width:9.1px;background:#7bcbb1"></i><i style="left:450.9px;top:124.4px;width:0.7px;background:#cfcfcf"></i><i style="left:443.2px;top:125.8px;width:2.1px;background:#7bcbb1"></i><i style="left:445.3px;top:125.8px;width:0.7px;background:#cfcfcf"></i><i style="left:443.2px;top:127.2px;width:0.7px;background:#cfcfcf"></i><i style="left:444.6px;top:127.2px;width:2.1px;background:#7bcbb1"></i><i style="left:446.7px;top:127.2px;width:0.7px;background:#cfcfcf"></i><i style="left:448.1px;top:127.2px;width:2.1px;background:#e0b7a6"></i><i style="left:450.9px;top:127.2px;width:11.9px;background:#e0b7a6"></i><i style="left:463.5px;top:127.2px;width:1.4px;background:#e0b7a6"></i><i style="left:465.6px;top:127.2px;width:8.4px;background:#e0b7a6"></i><i style="left:474.7px;top:127.2px;width:2.1px;background:#e0b7a6"></i><i style="left:444.6px;top:128.6px;width:5.6px;background:#7bcbb1"></i><i style="left:450.2px;top:128.6px;width:0.7px;background:#cfcfcf"></i><i style="left:451.6px;top:128.6px;width:6.3px;background:#e0b7a6"></i><i style="left:444.6px;top:130.0px;width:3.5px;background:#7bcbb1"></i><i style="left:448.1px;top:130.0px;width:0.7px;background:#cfcfcf"></i><i style="left:449.5px;top:130.0px;width:4.2px;background:#e0b7a6"></i><i style="left:441.8px;top:131.4px;width:5.6px;background:#7bcbb1"></i><i style="left:447.4px;top:131.4px;width:0.7px;background:#cfcfcf"></i><i style="left:443.2px;top:132.8px;width:4.9px;background:#7bcbb1"></i><i style="left:448.1px;top:132.8px;width:0.7px;background:#cfcfcf"></i><i style="left:449.5px;top:132.8px;width:1.4px;background:#cfcfcf"></i><i style="left:444.6px;top:134.2px;width:7.0px;background:#e0b7a6"></i><i style="left:452.3px;top:134.2px;width:2.8px;background:#e0b7a6"></i><i style="left:455.8px;top:134.2px;width:2.8px;background:#e0b7a6"></i><i style="left:459.3px;top:134.2px;width:3.5px;background:#e0b7a6"></i><i style="left:463.5px;top:134.2px;width:9.1px;background:#e0b7a6"></i><i style="left:443.2px;top:135.6px;width:4.9px;background:#7bcbb1"></i><i style="left:448.1px;top:135.6px;width:0.7px;background:#cfcfcf"></i><i style="left:444.6px;top:137.0px;width:0.7px;background:#cfcfcf"></i><i style="left:446.0px;top:137.0px;width:2.8px;background:#7bcbb1"></i><i style="left:448.8px;top:137.0px;width:0.7px;background:#cfcfcf"></i><i style="left:450.2px;top:137.0px;width:28.7px;background:#e0b7a6"></i><i style="left:479.6px;top:137.0px;width:10.5px;background:#e0b7a6"></i><i style="left:490.8px;top:137.0px;width:3.2px;background:#e0b7a6"></i><i style="left:446.0px;top:138.4px;width:2.8px;background:#7bcbb1"></i><i style="left:448.8px;top:138.4px;width:0.7px;background:#cfcfcf"></i><i style="left:447.4px;top:139.8px;width:7.0px;background:#7bcbb1"></i><i style="left:454.4px;top:139.8px;width:0.7px;background:#cfcfcf"></i><i style="left:448.8px;top:141.2px;width:2.1px;background:#7bcbb1"></i><i style="left:450.9px;top:141.2px;width:0.7px;background:#cfcfcf"></i><i style="left:448.8px;top:142.6px;width:0.7px;background:#cfcfcf"></i><i style="left:450.2px;top:142.6px;width:2.1px;background:#7bcbb1"></i><i style="left:452.3px;top:142.6px;width:0.7px;background:#cfcfcf"></i><i style="left:453.7px;top:142.6px;width:2.1px;background:#e0b7a6"></i><i style="left:450.2px;top:144.0px;width:5.6px;background:#7bcbb1"></i><i style="left:455.8px;top:144.0px;width:0.7px;background:#cfcfcf"></i><i style="left:457.2px;top:144.0px;width:5.6px;background:#e0b7a6"></i><i style="left:450.2px;top:145.4px;width:3.5px;background:#7bcbb1"></i><i style="left:453.7px;top:145.4px;width:0.7px;background:#cfcfcf"></i><i style="left:455.1px;top:145.4px;width:2.1px;background:#e0b7a6"></i><i style="left:457.9px;top:145.4px;width:36.1px;background:#e0b7a6"></i></div>
<div class="ln act" style="top:89.78px;left:516.20px;width:30px">1</div>
<div class="cl" style="top:89.78px;left:564.30px"><span class="k">apiVersion</span><span class="p">:&nbsp;</span><span class="v">v1</span></div>
<div class="ln" style="top:106.62px;left:516.20px;width:30px">2</div>
<div class="cl" style="top:106.62px;left:564.30px"><span class="k">kind</span><span class="p">:&nbsp;</span><span class="v">Pod</span></div>
<div class="ln" style="top:123.46px;left:516.20px;width:30px">3</div>
<div class="cl" style="top:123.46px;left:564.30px"><span class="k">metadata</span><span class="p">:</span></div>
<div class="ln" style="top:140.31px;left:516.20px;width:30px">4</div>
<div class="cl" style="top:140.31px;left:564.30px"><span class="p">&nbsp;&nbsp;</span><span class="k">name</span><span class="p">:&nbsp;</span><span class="v">add-capabilities</span></div>
<div class="ig" style="top:140.31px;left:564.20px"></div>
<div class="ln" style="top:157.15px;left:516.20px;width:30px">5</div>
<div class="cl" style="top:157.15px;left:564.30px"><span class="k">spec</span><span class="p">:</span></div>
<div class="ln" style="top:173.99px;left:516.20px;width:30px">6</div>
<div class="cl" style="top:173.99px;left:564.30px"><span class="p">&nbsp;&nbsp;</span><span class="k">initContainers</span><span class="p">:</span></div>
<div class="ig" style="top:173.99px;left:564.20px"></div>
<div class="ln" style="top:190.83px;left:516.20px;width:30px">7</div>
<div class="cl" style="top:190.83px;left:564.30px"><span class="p">&nbsp;&nbsp;-&nbsp;</span><span class="k">name</span><span class="p">:&nbsp;</span><span class="v">init</span></div>
<div class="ig" style="top:190.83px;left:564.20px"></div>
<div class="ln" style="top:207.67px;left:516.20px;width:30px">8</div>
<div class="cl" style="top:207.67px;left:564.30px"><span class="p">&nbsp;&nbsp;&nbsp;&nbsp;</span><span class="k">image</span><span class="p">:&nbsp;</span><span class="v">gcr.io/google-samples/node-hello:1.0</span></div>
<div class="ig" style="top:207.67px;left:564.20px"></div>
<div class="ig" style="top:207.67px;left:574.32px"></div>
<div class="ln" style="top:224.51px;left:516.20px;width:30px">9</div>
<div class="cl" style="top:224.51px;left:564.30px"><span class="p">&nbsp;&nbsp;&nbsp;&nbsp;</span><span class="k">securityContext</span><span class="p">:</span></div>
<div class="ig" style="top:224.51px;left:564.20px"></div>
<div class="ig" style="top:224.51px;left:574.32px"></div>
<div class="ln" style="top:241.36px;left:516.20px;width:30px">10</div>
<div class="cl" style="top:241.36px;left:564.30px"><span class="p">&nbsp;&nbsp;&nbsp;&nbsp;&nbsp;&nbsp;</span><span class="k">capabilities</span><span class="p">:</span></div>
<div class="ig" style="top:241.36px;left:564.20px"></div>
<div class="ig" style="top:241.36px;left:574.32px"></div>
<div class="ig" style="top:241.36px;left:584.44px"></div>
<div class="ln" style="top:258.20px;left:516.20px;width:30px">11</div>
<div class="cl" style="top:258.20px;left:564.30px"><span class="p">&nbsp;&nbsp;&nbsp;&nbsp;&nbsp;&nbsp;&nbsp;&nbsp;</span><span class="k">drop</span><span class="p">:</span></div>
<div class="ig" style="top:258.20px;left:564.20px"></div>
<div class="ig" style="top:258.20px;left:574.32px"></div>
<div class="ig" style="top:258.20px;left:584.44px"></div>
<div class="ig" style="top:258.20px;left:594.56px"></div>
<div class="ln" style="top:275.04px;left:516.20px;width:30px">12</div>
<div class="cl" style="top:275.04px;left:564.30px"><span class="p">&nbsp;&nbsp;&nbsp;&nbsp;&nbsp;&nbsp;&nbsp;&nbsp;&nbsp;&nbsp;-&nbsp;</span><span class="v">ALL</span></div>
<div class="ig" style="top:275.04px;left:564.20px"></div>
<div class="ig" style="top:275.04px;left:574.32px"></div>
<div class="ig" style="top:275.04px;left:584.44px"></div>
<div class="ig" style="top:275.04px;left:594.56px"></div>
<div class="ig" style="top:275.04px;left:604.68px"></div>
<div class="ln" style="top:291.88px;left:516.20px;width:30px">13</div>
<div class="cl" style="top:291.88px;left:564.30px"><span class="p">&nbsp;&nbsp;</span><span class="k">containers</span><span class="p">:</span></div>
<div class="ig" style="top:291.88px;left:564.20px"></div>
<div class="ln" style="top:308.72px;left:516.20px;width:30px">14</div>
<div class="cl" style="top:308.72px;left:564.30px"><span class="p">&nbsp;&nbsp;-&nbsp;</span><span class="k">name</span><span class="p">:&nbsp;</span><span class="v">add-capabilities</span></div>
<div class="ig" style="top:308.72px;left:564.20px"></div>
<div class="ln" style="top:325.57px;left:516.20px;width:30px">15</div>
<div class="cl" style="top:325.57px;left:564.30px"><span class="p">&nbsp;&nbsp;&nbsp;&nbsp;</span><span class="k">image</span><span class="p">:&nbsp;</span><span class="v">gcr.io/google-samples/node-hello:1.0</span></div>
<div class="ig" style="top:325.57px;left:564.20px"></div>
<div class="ig" style="top:325.57px;left:574.32px"></div>
<div class="ln" style="top:342.41px;left:516.20px;width:30px">16</div>
<div class="cl" style="top:342.41px;left:564.30px"><span class="p">&nbsp;&nbsp;&nbsp;&nbsp;</span><span class="k">securityContext</span><span class="p">:</span></div>
<div class="ig" style="top:342.41px;left:564.20px"></div>
<div class="ig" style="top:342.41px;left:574.32px"></div>
<div class="ln" style="top:359.25px;left:516.20px;width:30px">17</div>
<div class="cl" style="top:359.25px;left:564.30px"><span class="p">&nbsp;&nbsp;&nbsp;&nbsp;&nbsp;&nbsp;</span><span class="k">capabilities</span><span class="p">:</span></div>
<div class="ig" style="top:359.25px;left:564.20px"></div>
<div class="ig" style="top:359.25px;left:574.32px"></div>
<div class="ig" style="top:359.25px;left:584.44px"></div>
<div class="ln" style="top:376.09px;left:516.20px;width:30px">18</div>
<div class="cl" style="top:376.09px;left:564.30px"><span class="p">&nbsp;&nbsp;&nbsp;&nbsp;&nbsp;&nbsp;&nbsp;&nbsp;</span><span class="k">add</span><span class="p">:</span></div>
<div class="ig" style="top:376.09px;left:564.20px"></div>
<div class="ig" style="top:376.09px;left:574.32px"></div>
<div class="ig" style="top:376.09px;left:584.44px"></div>
<div class="ig" style="top:376.09px;left:594.56px"></div>
<div class="ln" style="top:392.93px;left:516.20px;width:30px">19</div>
<div class="cl" style="top:392.93px;left:564.30px"><span class="p">&nbsp;&nbsp;&nbsp;&nbsp;&nbsp;&nbsp;&nbsp;&nbsp;</span><span class="k">drop</span><span class="p">:</span></div>
<div class="ig" style="top:392.93px;left:564.20px"></div>
<div class="ig" style="top:392.93px;left:574.32px"></div>
<div class="ig" style="top:392.93px;left:584.44px"></div>
<div class="ig" style="top:392.93px;left:594.56px"></div>
<div class="ln" style="top:409.78px;left:516.20px;width:30px">20</div>
<div class="cl" style="top:409.78px;left:564.30px"><span class="p">&nbsp;&nbsp;&nbsp;&nbsp;&nbsp;&nbsp;&nbsp;&nbsp;&nbsp;&nbsp;-&nbsp;</span><span class="v">ALL</span></div>
<div class="ig" style="top:409.78px;left:564.20px"></div>
<div class="ig" style="top:409.78px;left:574.32px"></div>
<div class="ig" style="top:409.78px;left:584.44px"></div>
<div class="ig" style="top:409.78px;left:594.56px"></div>
<div class="ig" style="top:409.78px;left:604.68px"></div>
<div class="ln" style="top:426.62px;left:516.20px;width:30px">21</div>
<div class="cl" style="top:426.62px;left:564.30px"><span class="p">---</span></div>
<div class="ln" style="top:443.46px;left:516.20px;width:30px">22</div>
<div class="cl" style="top:443.46px;left:564.30px"><span class="k">apiVersion</span><span class="p">:&nbsp;</span><span class="v">v1</span></div>
<div class="ln" style="top:460.30px;left:516.20px;width:30px">23</div>
<div class="cl" style="top:460.30px;left:564.30px"><span class="k">kind</span><span class="p">:&nbsp;</span><span class="v">Pod</span></div>
<div class="ln" style="top:477.14px;left:516.20px;width:30px">24</div>
<div class="cl" style="top:477.14px;left:564.30px"><span class="k">metadata</span><span class="p">:</span></div>
<div class="ln" style="top:493.99px;left:516.20px;width:30px">25</div>
<div class="cl" style="top:493.99px;left:564.30px"><span class="p">&nbsp;&nbsp;</span><span class="k">name</span><span class="p">:&nbsp;</span><span class="v">add-capabilities-bad</span></div>
<div class="ig" style="top:493.99px;left:564.20px"></div>
<div class="ln" style="top:510.83px;left:516.20px;width:30px">26</div>
<div class="cl" style="top:510.83px;left:564.30px"><span class="k">spec</span><span class="p">:</span></div>
<div class="ln" style="top:527.67px;left:516.20px;width:30px">27</div>
<div class="cl" style="top:527.67px;left:564.30px"><span class="p">&nbsp;&nbsp;</span><span class="k">initContainers</span><span class="p">:</span></div>
<div class="ig" style="top:527.67px;left:564.20px"></div>
<div class="ln" style="top:544.51px;left:516.20px;width:30px">28</div>
<div class="cl" style="top:544.51px;left:564.30px"><span class="p">&nbsp;&nbsp;-&nbsp;</span><span class="k">name</span><span class="p">:&nbsp;</span><span class="v">init</span></div>
<div class="ig" style="top:544.51px;left:564.20px"></div>
<div class="ln" style="top:561.35px;left:516.20px;width:30px">29</div>
<div class="cl" style="top:561.35px;left:564.30px"><span class="p">&nbsp;&nbsp;&nbsp;&nbsp;</span><span class="k">image</span><span class="p">:&nbsp;</span><span class="v">gcr.io/google-samples/node-hello:1.0</span></div>
<div class="ig" style="top:561.35px;left:564.20px"></div>
<div class="ig" style="top:561.35px;left:574.32px"></div>
<div class="ln" style="top:578.20px;left:516.20px;width:30px">30</div>
<div class="cl" style="top:578.20px;left:564.30px"><span class="p">&nbsp;&nbsp;&nbsp;&nbsp;</span><span class="k">securityContext</span><span class="p">:</span></div>
<div class="ig" style="top:578.20px;left:564.20px"></div>
<div class="ig" style="top:578.20px;left:574.32px"></div>
<div class="mm"><i style="left:949.2px;top:88.0px;width:7.0px;background:#7bcbb1"></i><i style="left:956.2px;top:88.0px;width:0.7px;background:#cfcfcf"></i><i style="left:957.6px;top:88.0px;width:1.4px;background:#e0b7a6"></i><i style="left:949.2px;top:89.4px;width:2.8px;background:#7bcbb1"></i><i style="left:952.0px;top:89.4px;width:0.7px;background:#cfcfcf"></i><i style="left:953.4px;top:89.4px;width:2.1px;background:#e0b7a6"></i><i style="left:949.2px;top:90.8px;width:5.6px;background:#7bcbb1"></i><i style="left:954.8px;top:90.8px;width:0.7px;background:#cfcfcf"></i><i style="left:950.6px;top:92.2px;width:2.8px;background:#7bcbb1"></i><i style="left:953.4px;top:92.2px;width:0.7px;background:#cfcfcf"></i><i style="left:954.8px;top:92.2px;width:11.2px;background:#e0b7a6"></i><i style="left:949.2px;top:93.6px;width:2.8px;background:#7bcbb1"></i><i style="left:952.0px;top:93.6px;width:0.7px;background:#cfcfcf"></i><i style="left:950.6px;top:95.0px;width:9.8px;background:#7bcbb1"></i><i style="left:960.4px;top:95.0px;width:0.7px;background:#cfcfcf"></i><i style="left:950.6px;top:96.4px;width:0.7px;background:#cfcfcf"></i><i style="left:952.0px;top:96.4px;width:2.8px;background:#7bcbb1"></i><i style="left:954.8px;top:96.4px;width:0.7px;background:#cfcfcf"></i><i style="left:956.2px;top:96.4px;width:2.8px;background:#e0b7a6"></i><i style="left:952.0px;top:97.8px;width:3.5px;background:#7bcbb1"></i><i style="left:955.5px;top:97.8px;width:0.7px;background:#cfcfcf"></i><i style="left:956.9px;top:97.8px;width:25.2px;background:#e0b7a6"></i><i style="left:952.0px;top:99.2px;width:10.5px;background:#7bcbb1"></i><i style="left:962.5px;top:99.2px;width:0.7px;background:#cfcfcf"></i><i style="left:953.4px;top:100.6px;width:8.4px;background:#7bcbb1"></i><i style="left:961.8px;top:100.6px;width:0.7px;background:#cfcfcf"></i><i style="left:954.8px;top:102.0px;width:2.8px;background:#7bcbb1"></i><i style="left:957.6px;top:102.0px;width:0.7px;background:#cfcfcf"></i><i style="left:956.2px;top:103.4px;width:0.7px;background:#cfcfcf"></i><i style="left:957.6px;top:103.4px;width:2.1px;background:#e0b7a6"></i><i style="left:950.6px;top:104.8px;width:7.0px;background:#7bcbb1"></i><i style="left:957.6px;top:104.8px;width:0.7px;background:#cfcfcf"></i><i style="left:950.6px;top:106.2px;width:0.7px;background:#cfcfcf"></i><i style="left:952.0px;top:106.2px;width:2.8px;background:#7bcbb1"></i><i style="left:954.8px;top:106.2px;width:0.7px;background:#cfcfcf"></i><i style="left:956.2px;top:106.2px;width:11.2px;background:#e0b7a6"></i><i style="left:952.0px;top:107.6px;width:3.5px;background:#7bcbb1"></i><i style="left:955.5px;top:107.6px;width:0.7px;background:#cfcfcf"></i><i style="left:956.9px;top:107.6px;width:25.2px;background:#e0b7a6"></i><i style="left:952.0px;top:109.0px;width:10.5px;background:#7bcbb1"></i><i style="left:962.5px;top:109.0px;width:0.7px;background:#cfcfcf"></i><i style="left:953.4px;top:110.4px;width:8.4px;background:#7bcbb1"></i><i style="left:961.8px;top:110.4px;width:0.7px;background:#cfcfcf"></i><i style="left:954.8px;top:111.8px;width:2.1px;background:#7bcbb1"></i><i style="left:956.9px;top:111.8px;width:0.7px;background:#cfcfcf"></i><i style="left:954.8px;top:113.2px;width:2.8px;background:#7bcbb1"></i><i style="left:957.6px;top:113.2px;width:0.7px;background:#cfcfcf"></i><i style="left:956.2px;top:114.6px;width:0.7px;background:#cfcfcf"></i><i style="left:957.6px;top:114.6px;width:2.1px;background:#e0b7a6"></i><i style="left:949.2px;top:116.0px;width:2.1px;background:#cfcfcf"></i><i style="left:949.2px;top:117.4px;width:7.0px;background:#7bcbb1"></i><i style="left:956.2px;top:117.4px;width:0.7px;background:#cfcfcf"></i><i style="left:957.6px;top:117.4px;width:1.4px;background:#e0b7a6"></i><i style="left:949.2px;top:118.8px;width:2.8px;background:#7bcbb1"></i><i style="left:952.0px;top:118.8px;width:0.7px;background:#cfcfcf"></i><i style="left:953.4px;top:118.8px;width:2.1px;background:#e0b7a6"></i><i style="left:949.2px;top:120.2px;width:5.6px;background:#7bcbb1"></i><i style="left:954.8px;top:120.2px;width:0.7px;background:#cfcfcf"></i><i style="left:950.6px;top:121.6px;width:2.8px;background:#7bcbb1"></i><i style="left:953.4px;top:121.6px;width:0.7px;background:#cfcfcf"></i><i style="left:954.8px;top:121.6px;width:14.0px;background:#e0b7a6"></i><i style="left:949.2px;top:123.0px;width:2.8px;background:#7bcbb1"></i><i style="left:952.0px;top:123.0px;width:0.7px;background:#cfcfcf"></i><i style="left:950.6px;top:124.4px;width:9.8px;background:#7bcbb1"></i><i style="left:960.4px;top:124.4px;width:0.7px;background:#cfcfcf"></i><i style="left:950.6px;top:125.8px;width:0.7px;background:#cfcfcf"></i><i style="left:952.0px;top:125.8px;width:2.8px;background:#7bcbb1"></i><i style="left:954.8px;top:125.8px;width:0.7px;background:#cfcfcf"></i><i style="left:956.2px;top:125.8px;width:2.8px;background:#e0b7a6"></i><i style="left:952.0px;top:127.2px;width:3.5px;background:#7bcbb1"></i><i style="left:955.5px;top:127.2px;width:0.7px;background:#cfcfcf"></i><i style="left:956.9px;top:127.2px;width:25.2px;background:#e0b7a6"></i><i style="left:952.0px;top:128.6px;width:10.5px;background:#7bcbb1"></i><i style="left:962.5px;top:128.6px;width:0.7px;background:#cfcfcf"></i><i style="left:953.4px;top:130.0px;width:8.4px;background:#7bcbb1"></i><i style="left:961.8px;top:130.0px;width:0.7px;background:#cfcfcf"></i><i style="left:954.8px;top:131.4px;width:2.1px;background:#7bcbb1"></i><i style="left:956.9px;top:131.4px;width:0.7px;background:#cfcfcf"></i><i style="left:956.2px;top:132.8px;width:0.7px;background:#cfcfcf"></i><i style="left:957.6px;top:132.8px;width:14.0px;background:#7bcbb1"></i><i style="left:971.6px;top:132.8px;width:0.7px;background:#cfcfcf"></i><i style="left:972.3px;top:132.8px;width:9.1px;background:#e0b7a6"></i><i style="left:950.6px;top:134.2px;width:7.0px;background:#7bcbb1"></i><i style="left:957.6px;top:134.2px;width:0.7px;background:#cfcfcf"></i><i style="left:950.6px;top:135.6px;width:0.7px;background:#cfcfcf"></i><i style="left:952.0px;top:135.6px;width:2.8px;background:#7bcbb1"></i><i style="left:954.8px;top:135.6px;width:0.7px;background:#cfcfcf"></i><i style="left:956.2px;top:135.6px;width:11.2px;background:#e0b7a6"></i><i style="left:952.0px;top:137.0px;width:3.5px;background:#7bcbb1"></i><i style="left:955.5px;top:137.0px;width:0.7px;background:#cfcfcf"></i><i style="left:956.9px;top:137.0px;width:14.7px;background:#e0b7a6"></i><i style="left:952.0px;top:138.4px;width:10.5px;background:#7bcbb1"></i><i style="left:962.5px;top:138.4px;width:0.7px;background:#cfcfcf"></i><i style="left:953.4px;top:139.8px;width:8.4px;background:#7bcbb1"></i><i style="left:961.8px;top:139.8px;width:0.7px;background:#cfcfcf"></i></div>
<div class="abs" style="left:865.7px;top:504.1px;width:31.4px;height:31.4px;border-radius:50%;background:#6a9cd9;box-shadow:0 2px 4px rgba(0,0,0,.25)"></div>
<svg class="abs" style="left:873.40px;top:511.80px;opacity:1" width="16" height="16" viewBox="0 0 24 24"><path fill="#fff" stroke="#fff" stroke-width="0.7" d="M10,19H13V22H10V19M12,2C17.35,2.22 19.68,7.62 16.5,11.67C15.67,12.67 14.33,13.33 13.67,14.17C13,15 13,16 13,17H10C10,15.33 10,13.92 10.67,12.92C11.33,11.92 12.67,11.33 13.5,10.67C15.92,8.43 15.32,5.26 12,5A3,3 0 0,0 9,8H6A6,6 0 0,1 12,2Z"/></svg>
<div class="abs" style="left:905.6px;top:504.1px;width:86.8px;height:31.4px;border-radius:15.7px;background:#7aa9d9;border:1.4px solid #a9c3e4;box-shadow:0 2px 4px rgba(0,0,0,.25)"></div>
<svg class="abs" style="left:917.60px;top:512.80px;opacity:1" width="14" height="14" viewBox="0 0 24 24"><path fill="#fff" d="M8,5.14V19.14L19,12.14L8,5.14Z"/></svg>
<div class="abs" style="left:938.90px;top:512.69px;height:14.3px;line-height:14.3px;font-size:11px;color:#fff;white-space:nowrap;font-weight:bold;letter-spacing:1.000px;transform:scaleX(0.9436);transform-origin:0 50%;">START</div>
<div id="dlg"></div>
<div class="abs" style="left:60.20px;top:176.05px;height:18.2px;line-height:18.2px;font-size:14px;color:#fff;white-space:nowrap;letter-spacing:-0.047px;-webkit-text-stroke:0.2px #fff;">Results</div>
<svg class="abs" style="left:788.60px;top:176.00px;opacity:1" width="18" height="18" viewBox="0 0 24 24"><path fill="#c4c4c4" d="M19,3H5C3.89,3 3,3.89 3,5V19A2,2 0 0,0 5,21H19A2,2 0 0,0 21,19V5C21,3.89 20.1,3 19,3M19,5V19H5V5H19Z"/></svg>
<div class="abs" style="left:811.90px;top:177.84px;height:14.56px;line-height:14.56px;font-size:11.2px;color:#c6c6c6;white-space:nowrap;letter-spacing:0.134px;-webkit-text-stroke:0.25px #c6c6c6;">Hide no match results</div>
<svg class="abs" style="left:943.20px;top:176.70px;opacity:1" width="16.8" height="16.8" viewBox="0 0 24 24"><path fill="#fff" d="M19,6.41L17.59,5L12,10.59L6.41,5L5,6.41L10.59,12L5,17.59L6.41,19L12,13.41L17.59,19L19,17.59L13.41,12L19,6.41Z"/></svg>
<div class="abs" style="left:50px;width:925px;top:207.0px;height:1px;background:#343434"></div>
<div class="abs" style="left:60.50px;top:223.84px;height:14.56px;line-height:14.56px;font-size:11.2px;color:#fff;white-space:nowrap;letter-spacing:0.193px;-webkit-text-stroke:0.4px #fff;">Validation Results</div>
<div class="abs" style="left:50px;width:925px;top:252.5px;height:1px;background:#343434"></div>
<div class="abs" style="left:66.30px;top:265.94px;height:14.56px;line-height:14.56px;font-size:11.2px;color:#bdbdbd;white-space:nowrap;letter-spacing:-0.012px;-webkit-text-stroke:0.45px #bdbdbd;">APIVersion</div>
<div class="abs" style="left:193.70px;top:265.94px;height:14.56px;line-height:14.56px;font-size:11.2px;color:#bdbdbd;white-space:nowrap;letter-spacing:-0.239px;-webkit-text-stroke:0.45px #bdbdbd;">Kind</div>
<div class="abs" style="left:281.25px;top:265.94px;height:14.56px;line-height:14.56px;font-size:11.2px;color:#bdbdbd;white-space:nowrap;letter-spacing:-0.119px;-webkit-text-stroke:0.45px #bdbdbd;">Resource</div>
<div class="abs" style="left:451.25px;top:265.94px;height:14.56px;line-height:14.56px;font-size:11.2px;color:#bdbdbd;white-space:nowrap;letter-spacing:0.075px;-webkit-text-stroke:0.45px #bdbdbd;">Policy</div>
<div class="abs" style="left:659.30px;top:265.94px;height:14.56px;line-height:14.56px;font-size:11.2px;color:#bdbdbd;white-space:nowrap;letter-spacing:-0.412px;-webkit-text-stroke:0.45px #bdbdbd;">Rule</div>
<div class="abs" style="left:881.40px;top:265.94px;height:14.56px;line-height:14.56px;font-size:11.2px;color:#bdbdbd;white-space:nowrap;letter-spacing:-0.030px;-webkit-text-stroke:0.45px #bdbdbd;">Status</div>
<div class="abs" style="left:50px;width:925px;top:291.9px;height:1px;background:#343434"></div>
<div class="abs" style="left:66.30px;top:303.54px;height:14.56px;line-height:14.56px;font-size:11.2px;color:#f4f4f4;white-space:nowrap;-webkit-text-stroke:0.15px #f4f4f4;">v1</div>
<div class="abs" style="left:193.70px;top:303.54px;height:14.56px;line-height:14.56px;font-size:11.2px;color:#f4f4f4;white-space:nowrap;letter-spacing:-0.364px;-webkit-text-stroke:0.15px #f4f4f4;">Pod</div>
<div class="abs" style="left:281.25px;top:303.54px;height:14.56px;line-height:14.56px;font-size:11.2px;color:#f4f4f4;white-space:nowrap;letter-spacing:0.028px;-webkit-text-stroke:0.15px #f4f4f4;">add-capabilities</div>
<div class="abs" style="left:451.25px;top:303.54px;height:14.56px;line-height:14.56px;font-size:11.2px;color:#f4f4f4;white-space:nowrap;letter-spacing:0.008px;-webkit-text-stroke:0.15px #f4f4f4;">drop-all-capabilities</div>
<div class="abs" style="left:659.30px;top:303.54px;height:14.56px;line-height:14.56px;font-size:11.2px;color:#f4f4f4;white-space:nowrap;letter-spacing:-0.076px;-webkit-text-stroke:0.15px #f4f4f4;">require-drop-all</div>
<div class="abs" style="left:66.30px;top:340.54px;height:14.56px;line-height:14.56px;font-size:11.2px;color:#f4f4f4;white-space:nowrap;-webkit-text-stroke:0.15px #f4f4f4;">v1</div>
<div class="abs" style="left:193.70px;top:340.54px;height:14.56px;line-height:14.56px;font-size:11.2px;color:#f4f4f4;white-space:nowrap;letter-spacing:-0.364px;-webkit-text-stroke:0.15px #f4f4f4;">Pod</div>
<div class="abs" style="left:281.25px;top:340.54px;height:14.56px;line-height:14.56px;font-size:11.2px;color:#f4f4f4;white-space:nowrap;letter-spacing:-0.005px;-webkit-text-stroke:0.15px #f4f4f4;">add-capabilities-bad</div>
<div class="abs" style="left:451.25px;top:340.54px;height:14.56px;line-height:14.56px;font-size:11.2px;color:#f4f4f4;white-space:nowrap;letter-spacing:0.008px;-webkit-text-stroke:0.15px #f4f4f4;">drop-all-capabilities</div>
<div class="abs" style="left:659.30px;top:340.54px;height:14.56px;line-height:14.56px;font-size:11.2px;color:#f4f4f4;white-space:nowrap;letter-spacing:-0.076px;-webkit-text-stroke:0.15px #f4f4f4;">require-drop-all</div>
<div class="abs" style="left:50px;width:925px;top:328.5px;height:1px;background:#343434"></div>
<div class="abs" style="left:50px;width:925px;top:365.6px;height:1px;background:#343434"></div>
<div class="abs" style="left:876px;top:299.3px;width:37.9px;height:22.5px;border-radius:11.25px;background:#1e6824"></div>
<div class="abs" style="left:883.90px;top:303.93px;height:12.74px;line-height:12.74px;font-size:9.8px;color:#e8f5e4;white-space:nowrap;letter-spacing:0.133px;-webkit-text-stroke:0.25px #e8f5e4;">pass</div>
<div class="abs" style="left:882.9px;top:336.2px;width:31px;height:22.7px;border-radius:11.35px;background:#d33338"></div>
<div class="abs" style="left:891.60px;top:341.03px;height:12.74px;line-height:12.74px;font-size:9.8px;color:#fff;white-space:nowrap;letter-spacing:0.391px;-webkit-text-stroke:0.4px #fff;">fail</div>
<svg class="abs" style="left:937.10px;top:303.30px;opacity:1" width="14.6" height="14.6" viewBox="0 0 24 24"><path fill="#fff" stroke="#fff" stroke-width="0.9" d="M7.41,8.58L12,13.17L16.59,8.58L18,10L12,16L6,10L7.41,8.58Z"/></svg>
<svg class="abs" style="left:937.10px;top:340.10px;opacity:1" width="14.6" height="14.6" viewBox="0 0 24 24"><path fill="#fff" stroke="#fff" stroke-width="0.9" d="M7.41,8.58L12,13.17L16.59,8.58L18,10L12,16L6,10L7.41,8.58Z"/></svg>
<div class="abs" style="left:61.30px;top:378.93px;height:13.13px;line-height:13.13px;font-size:10.1px;color:#c8586d;white-space:nowrap;font-weight:bold;letter-spacing:0.900px;transform:scaleX(0.8726);transform-origin:0 50%;">CLOSE</div>
<div class="abs" style="left:804.7px;top:371.8px;width:166.1px;height:25.8px;border-radius:3px;background:#2b3343"></div>
<div class="abs" style="left:811.80px;top:378.93px;height:13.13px;line-height:13.13px;font-size:10.1px;color:#79b0e3;white-space:nowrap;font-weight:bold;letter-spacing:0.900px;transform:scaleX(0.8990);transform-origin:0 50%;">COPY POLICY TO CLIPBOARD</div>
</body></html>
